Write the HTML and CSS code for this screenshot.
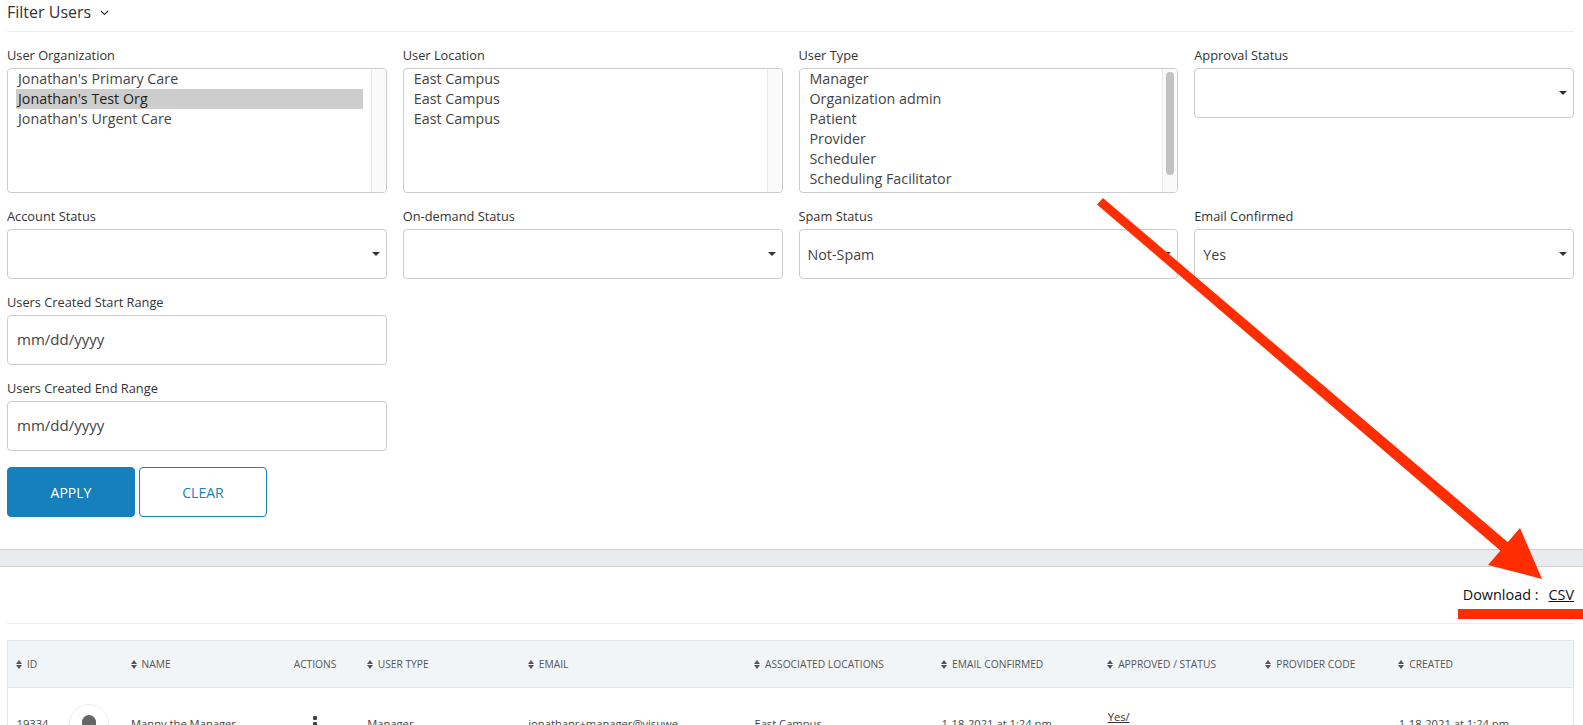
FILE: index.html
```html
<!DOCTYPE html>
<html lang="en">
<head>
<meta charset="utf-8">
<title>Filter Users</title>
<link rel="stylesheet" href="styles.css">
</head>
<body>
<section class="filter-panel">
  <div class="panel-title">
    <span>Filter Users</span>
    <svg class="chevron" viewBox="0 0 9 6" width="9" height="6"><path d="M1 1l3.5 3.5L8 1" fill="none" stroke="#333" stroke-width="1.1"/></svg>
  </div>
  <div class="filter-grid">
    <div class="field">
      <div class="field-label">User Organization</div>
      <div class="listbox">
        <ul class="options">
          <li>Jonathan's Primary Care</li>
          <li class="selected">Jonathan's Test Org</li>
          <li>Jonathan's Urgent Care</li>
        </ul>
        <div class="scroll-track"></div>
      </div>
    </div>
    <div class="field">
      <div class="field-label">User Location</div>
      <div class="listbox">
        <ul class="options">
          <li>East Campus</li>
          <li>East Campus</li>
          <li>East Campus</li>
        </ul>
        <div class="scroll-track"></div>
      </div>
    </div>
    <div class="field">
      <div class="field-label">User Type</div>
      <div class="listbox">
        <ul class="options">
          <li>Manager</li>
          <li>Organization admin</li>
          <li>Patient</li>
          <li>Provider</li>
          <li>Scheduler</li>
          <li>Scheduling Facilitator</li>
        </ul>
        <div class="scroll-track"><div class="scroll-thumb"></div></div>
      </div>
    </div>
    <div class="field">
      <div class="field-label">Approval Status</div>
      <div class="dropdown"></div>
    </div>
    <div class="field">
      <div class="field-label">Account Status</div>
      <div class="dropdown"></div>
    </div>
    <div class="field">
      <div class="field-label">On-demand Status</div>
      <div class="dropdown"></div>
    </div>
    <div class="field">
      <div class="field-label">Spam Status</div>
      <div class="dropdown">Not-Spam</div>
    </div>
    <div class="field">
      <div class="field-label">Email Confirmed</div>
      <div class="dropdown">Yes</div>
    </div>
    <div class="field first-col">
      <div class="field-label">Users Created Start Range</div>
      <div class="date-input">mm/dd/yyyy</div>
    </div>
    <div class="field first-col">
      <div class="field-label">Users Created End Range</div>
      <div class="date-input">mm/dd/yyyy</div>
    </div>
  </div>
  <div class="actions">
    <button class="btn btn-primary" type="button">APPLY</button>
    <button class="btn btn-outline" type="button">CLEAR</button>
  </div>
</section>
<div class="band"></div>
<section class="results">
  <div class="download-row">
    <span>Download :</span>
    <a class="csv" href="#">CSV</a>
  </div>
  <table class="users">
    <colgroup>
      <col class="c-id"><col class="c-avatar"><col class="c-name"><col class="c-actions"><col class="c-type"><col class="c-email"><col class="c-loc"><col class="c-conf"><col class="c-appr"><col class="c-prov"><col class="c-created">
    </colgroup>
    <thead>
      <tr>
        <th><span class="sort"></span>ID</th>
        <th></th>
        <th><span class="sort"></span>NAME</th>
        <th>ACTIONS</th>
        <th><span class="sort"></span>USER TYPE</th>
        <th><span class="sort"></span>EMAIL</th>
        <th><span class="sort"></span>ASSOCIATED LOCATIONS</th>
        <th><span class="sort"></span>EMAIL CONFIRMED</th>
        <th><span class="sort"></span>APPROVED / STATUS</th>
        <th><span class="sort"></span>PROVIDER CODE</th>
        <th><span class="sort"></span>CREATED</th>
      </tr>
    </thead>
    <tbody>
      <tr>
        <td>19334</td>
        <td>
          <div class="avatar">
            <svg viewBox="0 0 40 40" width="40" height="40"><ellipse cx="20" cy="18.5" rx="7.5" ry="8" fill="#666"/></svg>
          </div>
        </td>
        <td>Manny the Manager</td>
        <td><div class="kebab"><i></i><i></i><i></i></div></td>
        <td>Manager</td>
        <td>jonathanr+manager@visuwe</td>
        <td>East Campus</td>
        <td>1-18-2021 at 1:24 pm</td>
        <td class="status"><a href="#">Yes/</a></td>
        <td></td>
        <td>1-18-2021 at 1:24 pm</td>
      </tr>
    </tbody>
  </table>
</section>
<svg class="annotation" viewBox="0 0 1583 725" width="1583" height="725">
  <polygon points="1103,198 1510,544 1502,552 1097,204.5" fill="#ff2d00"/>
  <polygon points="1542,579 1520,528 1488,565" fill="#ff2d00"/>
  <rect x="1458" y="609" width="125" height="10" fill="#ff2d00"/>
</svg>
</body>
</html>
```
FILE: styles.css
```css
* { box-sizing: border-box; }
html, body { height: 725px; overflow: hidden; }
body {
  margin: 0;
  background: #fff;
  color: #333;
  font-family: "Open Sans", "Liberation Sans", sans-serif;
  font-size: 14px;
}
.filter-panel { padding: 0 9px 0 7px; height: 549px; }
.panel-title {
  height: 32px;
  display: flex;
  align-items: center;
  gap: 9px;
  padding-bottom: 7px;
  font-size: 16px;
  border-bottom: 1px solid #eceeef;
}
.chevron { margin-top: 1px; }
.filter-grid {
  display: grid;
  grid-template-columns: repeat(4, 1fr);
  column-gap: 16px;
  row-gap: 14px;
  padding-top: 14px;
}
.first-col { grid-column: 1; }
.field-label { font-size: 12.8px; line-height: 18px; margin-bottom: 4px; color: #333; }
.listbox {
  height: 125px;
  border: 1px solid #ccc;
  border-radius: 4px;
  display: flex;
  overflow: hidden;
}
.options { list-style: none; margin: 0; padding: 0 8px; flex: 1; }
.options li { height: 20px; line-height: 20px; padding-left: 2px; font-size: 14.3px; color: #444; }
.options li.selected { background: #cdcdcd; color: #222; }
.scroll-track {
  width: 15px;
  background: #fafafa;
  border-left: 1px solid #e8e8e8;
  padding: 3px 2px;
}
.scroll-thumb { height: 103px; width: 8px; background: #c1c1c1; border-radius: 4px; margin-left: 1px; }
.dropdown {
  position: relative;
  height: 50px;
  border: 1px solid #ccc;
  border-radius: 4px;
  padding: 0 8px;
  line-height: 50px;
  font-size: 14.3px;
  color: #444;
}
.dropdown::after {
  content: "";
  position: absolute;
  right: 6px;
  top: 22px;
  border-left: 4px solid transparent;
  border-right: 4px solid transparent;
  border-top: 4px solid #333;
}
.date-input {
  height: 50px;
  border: 1px solid #ccc;
  border-radius: 4px;
  padding: 0 9px;
  line-height: 46px;
  font-size: 15px;
  color: #444;
}
.actions { display: flex; gap: 4px; margin-top: 16px; }
.btn {
  height: 50px;
  border-radius: 4px;
  font: 14px "Open Sans", "Liberation Sans", sans-serif;
  cursor: pointer;
}
.btn-primary { width: 128px; background: #1580bb; color: #fff; border: 1px solid #1580bb; }
.btn-outline { width: 128px; background: #fff; color: #1580bb; border: 1px solid #1580bb; }
.band {
  height: 18px;
  background: #e9ecef;
  border-top: 1px solid #ccd0d4;
  border-bottom: 1px solid #ccd0d4;
}
.results { padding: 0 9px 0 7px; }
.download-row {
  height: 57px;
  display: flex;
  justify-content: flex-end;
  align-items: center;
  gap: 10px;
  padding-bottom: 1px;
  font-size: 14.4px;
  color: #111;
  border-bottom: 1px solid #eceeef;
}
.csv { color: #111; text-decoration: underline; }
.users {
  width: 100%;
  margin-top: 16px;
  border-collapse: collapse;
  table-layout: fixed;
  border: 1px solid #e3e7ea;
}
.c-id { width: 53px; }
.c-avatar { width: 62px; }
.c-name { width: 163px; }
.c-actions { width: 73px; }
.c-type { width: 161px; }
.c-email { width: 226px; }
.c-loc { width: 187px; }
.c-conf { width: 166px; }
.c-appr { width: 158px; }
.c-prov { width: 133px; }
.c-created { width: 183px; }
.users thead tr { background: #f1f5f8; height: 47px; border-bottom: 1px solid #e3e7ea; }
.users th {
  text-align: left;
  font-weight: 400;
  font-size: 10.25px;
  color: #555;
  padding: 0 8px;
  white-space: nowrap;
}
.sort {
  display: inline-block;
  position: relative;
  width: 6.5px;
  height: 9px;
  margin-right: 4.5px;
  vertical-align: -1px;
}
.sort::before, .sort::after {
  content: "";
  position: absolute;
  left: 0;
  border-left: 3.25px solid transparent;
  border-right: 3.25px solid transparent;
}
.sort::before { top: 0; border-bottom: 4px solid #555; }
.sort::after { bottom: 0; border-top: 4px solid #555; }
.users td {
  font-size: 11.2px;
  color: #444;
  padding: 16px 8px 16px 8.5px;
  vertical-align: top;
  white-space: nowrap;
  line-height: 40px;
}
.users td.status { line-height: 16px; padding-top: 21px; }
.users td.status a { color: #333; text-decoration: underline; }
.avatar {
  width: 40px;
  height: 40px;
  border: 1px solid #eee;
  border-radius: 50%;
  overflow: hidden;
  display: flex;
  align-items: center;
  justify-content: center;
  flex: none;
}
.kebab { display: flex; flex-direction: column; gap: 2px; padding: 12px 0 0 19px; }
.kebab i { width: 4px; height: 4px; background: #444; border-radius: 1px; }
.annotation { position: absolute; left: 0; top: 0; pointer-events: none; }
```
